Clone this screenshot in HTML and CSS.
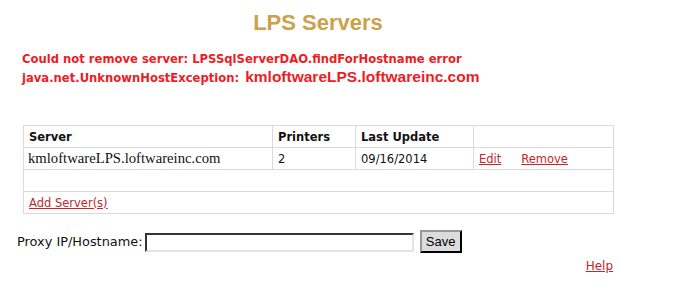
FILE: index.html
```html
<!DOCTYPE html>
<html>
<head>
<meta charset="utf-8">
<link rel="stylesheet" href="styles.css">
</head>
<body>
<div class="page">
  <h1 class="title">LPS Servers</h1>
  <div class="error">
    <div class="error-line">Could not remove server: LPSSqlServerDAO.findForHostname error</div>
    <div class="error-line">java.net.UnknownHostException: <span class="host">kmloftwareLPS.loftwareinc.com</span></div>
  </div>
  <table class="servers">
    <colgroup>
      <col class="c1"><col class="c2"><col class="c3"><col class="c4">
    </colgroup>
    <tr class="head">
      <th>Server</th><th>Printers</th><th>Last Update</th><th></th>
    </tr>
    <tr>
      <td class="name">kmloftwareLPS.loftwareinc.com</td>
      <td>2</td>
      <td>09/16/2014</td>
      <td><a href="#" class="link">Edit</a><a href="#" class="link remove">Remove</a></td>
    </tr>
    <tr><td colspan="4"></td></tr>
    <tr><td colspan="4"><a href="#" class="link">Add Server(s)</a></td></tr>
  </table>
  <div class="proxy">
    <span class="label">Proxy IP/Hostname:</span>
    <input class="field" type="text">
    <button class="save">Save</button>
  </div>
  <div class="help"><a href="#" class="link">Help</a></div>
</div>
</body>
</html>
```
FILE: styles.css
```css
html, body {
  margin: 0;
  padding: 0;
  background: #fff;
}
.page {
  width: 590px;
  margin-left: 23px;
  font-family: "DejaVu Sans", Verdana, sans-serif;
  font-size: 11px;
  color: #111;
}
.title {
  margin: 0;
  padding-top: 11px;
  height: 36px;
  text-align: center;
  font-family: "Liberation Sans", Arial, sans-serif;
  font-weight: bold;
  font-size: 22px;
  line-height: 24px;
  color: #c9a24a;
}
.error {
  margin-left: -1px;
  padding-top: 3px;
  color: #ee1c24;
  font-weight: bold;
  font-size: 11.6px;
  line-height: 18px;
}
.host {
  margin-left: 2px;
  font-family: "Liberation Sans", Arial, sans-serif;
  font-size: 15.5px;
}
.servers {
  margin-top: 38px;
  width: 590px;
  border-collapse: collapse;
  table-layout: fixed;
}
.c1 { width: 249px; }
.c2 { width: 83px; }
.c3 { width: 118px; }
.c4 { width: 140px; }
.servers th, .servers td {
  border: 1px solid #dadada;
  height: 21px;
  padding: 0 5px;
  text-align: left;
  vertical-align: middle;
  font-size: 11.5px;
}
.servers th {
  font-weight: bold;
}
.servers td.name {
  font-family: "Liberation Serif", "Times New Roman", serif;
  font-size: 14.7px;
  padding-left: 4px;
}
.link {
  color: #c1272d;
  text-decoration: underline;
}
.remove {
  margin-left: 20px;
}
.proxy {
  display: flex;
  align-items: center;
  margin-left: -6px;
  margin-top: 15px;
  height: 24px;
  font-size: 12.9px;
}
.label {
  margin-right: 2px;
}
.field {
  width: 265px;
  height: 15px;
  margin: 3px 0 0 0;
  padding: 0;
  border: 2px inset #888;
  border-right-color: #e4e4e4;
  border-bottom-color: #e4e4e4;
  background: #fff;
}
.save {
  margin-left: 6px;
  width: 42px;
  height: 23px;
  padding: 0;
  background: #dcdcdc;
  border: 2px outset #999;
  border-right-color: #222;
  border-bottom-color: #222;
  font-family: "Liberation Sans", Arial, sans-serif;
  font-size: 13px;
  color: #000;
}
.help {
  margin-top: 6px;
  text-align: right;
  font-size: 12px;
}
```
